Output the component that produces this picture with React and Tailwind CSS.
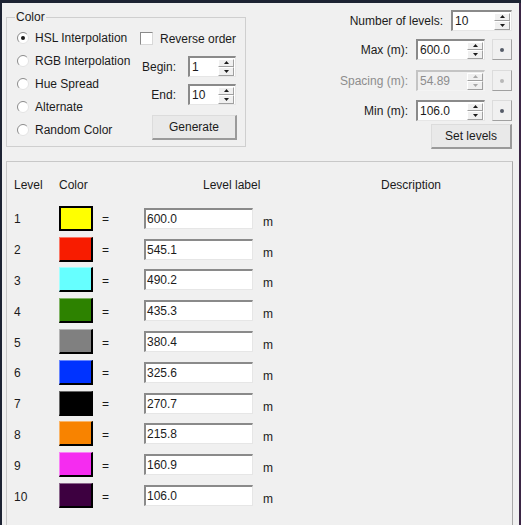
import React from 'react';

const levels = [
  { n: 1, color: 'bg-[#ffff00]', value: '600.0', selected: true },
  { n: 2, color: 'bg-[#f81c00]', value: '545.1' },
  { n: 3, color: 'bg-[#66ffff]', value: '490.2' },
  { n: 4, color: 'bg-[#2d8200]', value: '435.3' },
  { n: 5, color: 'bg-[#808080]', value: '380.4' },
  { n: 6, color: 'bg-[#0033ff]', value: '325.6' },
  { n: 7, color: 'bg-[#000000]', value: '270.7' },
  { n: 8, color: 'bg-[#f88300]', value: '215.8' },
  { n: 9, color: 'bg-[#f52cf0]', value: '160.9' },
  { n: 10, color: 'bg-[#3d0040]', value: '106.0' },
];

const Radio = ({ checked, label }) => (
  <div className="flex items-center h-[23px]">
    <svg width="12" height="12" viewBox="0 0 12 12">
      <circle cx="6" cy="6" r="5.5" fill="#ffffff" />
      <path d="M2.11 9.89 A5.5 5.5 0 0 1 9.89 2.11" fill="none" stroke="#8a8a8a" />
      <path d="M9.89 2.11 A5.5 5.5 0 0 1 2.11 9.89" fill="none" stroke="#e3e3e3" />
      {checked && <circle cx="6" cy="6" r="2" fill="#1b1b1b" />}
    </svg>
    <span className="ml-[6px]">{label}</span>
  </div>
);

const Arrow = ({ up, disabled }) => (
  <svg width="5" height="3" viewBox="0 0 5 3">
    <path d={up ? 'M2.5 0 L5 3 L0 3 Z' : 'M0 0 L5 0 L2.5 3 Z'} fill={disabled ? '#a8a8a8' : '#1b1b1b'} />
  </svg>
);

const Spinner = ({ disabled }) => (
  <div className="flex flex-col w-[16px] h-[17px] mr-[1px] self-center">
    <div className="flex-1 flex items-center justify-center bg-[#f0f0f0] border-b border-r border-[#a0a0a0] border-t border-l border-t-white border-l-white">
      <Arrow up disabled={disabled} />
    </div>
    <div className="flex-1 flex items-center justify-center bg-[#f0f0f0] border-b border-r border-[#a0a0a0] border-t border-l border-t-white border-l-white">
      <Arrow disabled={disabled} />
    </div>
  </div>
);

const SpinBox = ({ value, width, disabled }) => (
  <div
    className={`flex h-[21px] ${width} border-t-2 border-l-2 border-r border-b ${
      disabled
        ? 'bg-[#f0f0f0] border-t-[#c4c4c4] border-l-[#c4c4c4] border-r-[#f4f4f4] border-b-[#f4f4f4] text-[#8d8d8d]'
        : 'bg-white border-t-[#8a8a8a] border-l-[#8a8a8a] border-r-[#e6e6e6] border-b-[#e6e6e6]'
    }`}
  >
    <span className="flex-1 pl-[2px] leading-[18px]">{value}</span>
    <Spinner disabled={disabled} />
  </div>
);

const DotButton = ({ disabled }) => (
  <div className="w-[20px] h-[21px] ml-[7px] flex items-center justify-center bg-[#f0f0f0] border border-t-[#dcdcdc] border-l-[#dcdcdc] border-r-[#a0a0a0] border-b-[#a0a0a0]">
    <div className={`w-[4px] h-[4px] rounded-full ${disabled ? 'bg-[#b8b8b8]' : 'bg-[#555c68]'}`} />
  </div>
);

const Button = ({ children, width }) => (
  <div
    className={`${width} h-[25px] flex items-center justify-center bg-[#e9e9e9] border-t border-l border-t-[#dcdcdc] border-l-[#dcdcdc] border-r-2 border-b-2 border-r-[#9a9a9a] border-b-[#9a9a9a]`}
  >
    {children}
  </div>
);

const App = () => {
  return (
    <div
      className="w-[521px] h-[525px] overflow-hidden bg-[#1d2333] flex flex-col text-[12px] text-[#1b1b1b]"
      style={{ fontFamily: '"Liberation Sans", Arial, sans-serif' }}
    >
      <div className="h-[3px] shrink-0" />
      <div className="flex flex-1 min-h-0">
        <div className="w-[2px] shrink-0" />
        <div className="flex-1 bg-[#f0f0f0] flex flex-col overflow-hidden">
          {/* Top controls */}
          <div className="h-[158px] shrink-0 flex">
            <fieldset className="ml-[4px] mt-[7px] w-[240px] self-start border border-[#cfcfcf] pb-[5px]">
              <legend className="ml-[8px] px-[1px] leading-[14px]">Color</legend>
              <div className="flex">
                <div className="pl-[10px] pt-[2px] w-[133px]">
                  <Radio checked label="HSL Interpolation" />
                  <Radio label="RGB Interpolation" />
                  <Radio label="Hue Spread" />
                  <Radio label="Alternate" />
                  <Radio label="Random Color" />
                </div>
                <div className="flex flex-col">
                  <div className="flex items-center mt-[8px] h-[13px]">
                    <div className="w-[13px] h-[13px] bg-white border border-t-[#8a8a8a] border-l-[#8a8a8a] border-r-[#d8d8d8] border-b-[#d8d8d8]" />
                    <span className="ml-[7px]">Reverse order</span>
                  </div>
                  <div className="flex items-center mt-[11px]">
                    <span className="w-[36px] text-right">Begin:</span>
                    <div className="ml-[12px]">
                      <SpinBox value="1" width="w-[48px]" />
                    </div>
                  </div>
                  <div className="flex items-center mt-[7px]">
                    <span className="w-[36px] text-right">End:</span>
                    <div className="ml-[12px]">
                      <SpinBox value="10" width="w-[48px]" />
                    </div>
                  </div>
                  <div className="mt-[10px] ml-[12px]">
                    <Button width="w-[85px]">Generate</Button>
                  </div>
                </div>
              </div>
            </fieldset>

            <div className="ml-auto mr-[7px] flex flex-col items-end">
              <div className="flex items-center mt-[7px]">
                <span className="mr-[8px]">Number of levels:</span>
                <SpinBox value="10" width="w-[61px]" />
              </div>
              <div className="flex items-center mt-[8px]">
                <span className="mr-[8px]">Max (m):</span>
                <SpinBox value="600.0" width="w-[69px]" />
                <DotButton />
              </div>
              <div className="flex items-center mt-[10px]">
                <span className="mr-[8px] text-[#8d8d8d]">Spacing (m):</span>
                <SpinBox value="54.89" width="w-[69px]" disabled />
                <DotButton disabled />
              </div>
              <div className="flex items-center mt-[9px]">
                <span className="mr-[8px]">Min (m):</span>
                <SpinBox value="106.0" width="w-[69px]" />
                <DotButton />
              </div>
              <div className="mt-[3px]">
                <Button width="w-[81px]">Set levels</Button>
              </div>
            </div>
          </div>

          {/* Levels panel */}
          <div className="ml-[4px] w-[507px] h-[420px] shrink-0 border border-t-[#c8c8c8] border-l-[#c8c8c8] border-r-[#a8a8a8] border-b-[#a8a8a8]">
            <div className="pt-[16px] pl-[7px] flex h-[30px] leading-[14px]">
              <span className="w-[45px]">Level</span>
              <span className="w-[144px]">Color</span>
              <span className="w-[178px]">Level label</span>
              <span>Description</span>
            </div>
            <div className="mt-[11px] pl-[7px]">
              {levels.map((lv) => (
                <div key={lv.n} className="flex items-center h-[30.8px]">
                  <span className="w-[45px] pt-[2px]">{lv.n}</span>
                  <div
                    className={`w-[34px] h-[25px] ${lv.color} ${
                      lv.selected
                        ? 'border-2 border-black'
                        : 'border-t border-l border-t-white/40 border-l-white/40 border-r-2 border-b-2 border-r-black border-b-black'
                    }`}
                  />
                  <span className="ml-[9px] w-[42px] pt-[2px]">=</span>
                  <div className="w-[109px] h-[21px] bg-white border-t-2 border-l-2 border-t-[#8a8a8a] border-l-[#8a8a8a] border-r border-b border-r-[#e6e6e6] border-b-[#e6e6e6] pl-[1px] leading-[18px]">
                    {lv.value}
                  </div>
                  <span className="ml-[10px] pt-[7px]">m</span>
                </div>
              ))}
            </div>
          </div>
        </div>
        <div className="w-[2px] shrink-0 bg-[#3b2645]" />
      </div>
    </div>
  );
};

export default App;
